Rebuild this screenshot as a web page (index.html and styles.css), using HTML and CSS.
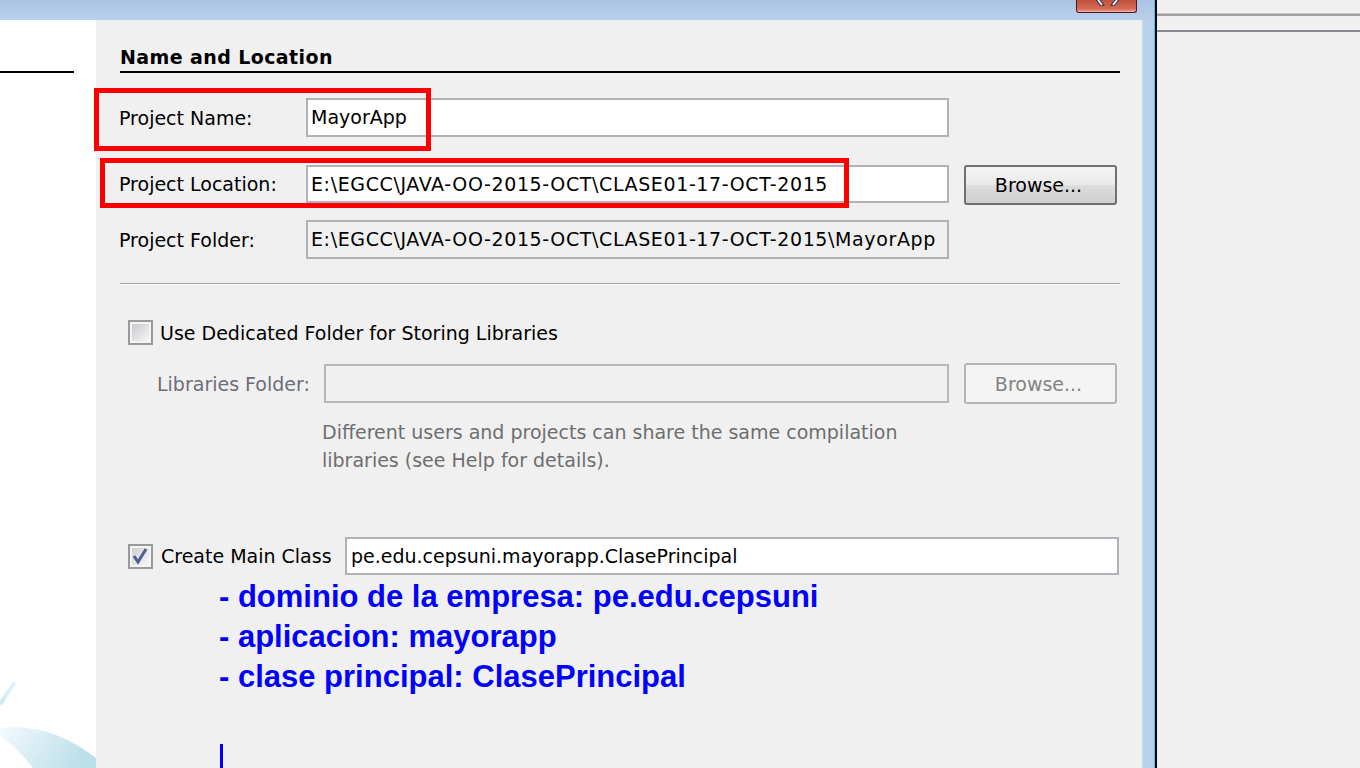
FILE: index.html
```html
<!DOCTYPE html>
<html>
<head>
<meta charset="utf-8">
<link rel="stylesheet" href="styles.css">
</head>
<body>
<div class="window">
  <div class="titlebar">
    <div class="close">
      <svg class="close-x" width="24" height="6" viewBox="0 0 24 6">
        <path d="M2 0 L6 5" stroke="#3b3b4a" stroke-width="4" stroke-linecap="square"/>
        <path d="M2 0 L6 5" stroke="#f4f4f8" stroke-width="2"/>
        <path d="M21 0 L17 5" stroke="#3b3b4a" stroke-width="4" stroke-linecap="square"/>
        <path d="M21 0 L17 5" stroke="#f4f4f8" stroke-width="2"/>
      </svg>
    </div>
  </div>
  <div class="body">
    <div class="side">
      <div class="side-line"></div>
      <svg class="swoosh" width="96" height="90" viewBox="0 0 96 90">
        <defs>
          <linearGradient id="sw" x1="0" y1="0" x2="1" y2="0.3">
            <stop offset="0" stop-color="#f4fafd"/>
            <stop offset="1" stop-color="#bcdfeb"/>
          </linearGradient>
          <linearGradient id="sl" x1="0" y1="1" x2="1" y2="0">
            <stop offset="0" stop-color="#cfe8f2"/>
            <stop offset="1" stop-color="#e6f3f9"/>
          </linearGradient>
        </defs>
        <path d="M0 22 L13 4 L17 4 L3 26 L0 27 Z" fill="url(#sl)"/>
        <path d="M0 50 Q50 44 96 80 L96 90 L33 90 Q16 68 0 58 Z" fill="url(#sw)"/>
      </svg>
    </div>
    <div class="main">
      <div class="heading">Name and Location</div>

      <div class="row r1">
        <div class="label">Project Name:</div>
        <div class="field">MayorApp</div>
      </div>

      <div class="row r2">
        <div class="label">Project Location:</div>
        <div class="field path">E:\EGCC\JAVA-OO-2015-OCT\CLASE01-17-OCT-2015</div>
        <div class="btn">Browse...</div>
      </div>

      <div class="row r3">
        <div class="label">Project Folder:</div>
        <div class="field ro path">E:\EGCC\JAVA-OO-2015-OCT\CLASE01-17-OCT-2015\MayorApp</div>
      </div>

      <div class="sep"></div>

      <div class="row chk1">
        <svg class="cb" width="25" height="25" viewBox="0 0 25 25">
          <defs>
            <linearGradient id="cbg" x1="0" y1="0" x2="1" y2="1">
              <stop offset="0" stop-color="#c9c9cf"/>
              <stop offset="1" stop-color="#f6f6f6"/>
            </linearGradient>
          </defs>
          <rect x="1" y="1" width="23" height="23" fill="#f4f4f4" stroke="#9a9a9a" stroke-width="2"/>
          <rect x="4" y="4" width="17" height="17" fill="url(#cbg)"/>
        </svg>
        <div class="cb-text">Use Dedicated Folder for Storing Libraries</div>
      </div>

      <div class="row r4">
        <div class="label dis">Libraries Folder:</div>
        <div class="field dfield"></div>
        <div class="btn dbtn">Browse...</div>
      </div>

      <div class="help">Different users and projects can share the same compilation<br>libraries (see Help for details).</div>

      <div class="row chk2">
        <svg class="cb" width="25" height="25" viewBox="0 0 25 25">
          <defs>
            <linearGradient id="cbg2" x1="0" y1="0" x2="1" y2="1">
              <stop offset="0" stop-color="#cfd0d6"/>
              <stop offset="1" stop-color="#f6f6f6"/>
            </linearGradient>
          </defs>
          <rect x="1" y="1" width="23" height="23" fill="#f4f4f4" stroke="#9a9a9a" stroke-width="2"/>
          <rect x="4" y="4" width="17" height="17" fill="url(#cbg2)"/>
          <path d="M6 12 L10 18 L18 5" fill="none" stroke="#4c5f91" stroke-width="3"/>
        </svg>
        <div class="cb-text wide">Create Main Class</div>
        <div class="field mfield">pe.edu.cepsuni.mayorapp.ClasePrincipal</div>
      </div>

      <div class="notes">
        <div>- dominio de la empresa: pe.edu.cepsuni</div>
        <div>- aplicacion: mayorapp</div>
        <div>- clase principal: ClasePrincipal</div>
      </div>
      <div class="caret"></div>
    </div>
    <div class="frame"></div>

    <div class="mark m1"></div>
    <div class="mark m2"></div>
  </div>
</div>
<div class="edge"></div>
<div class="desk">
  <div class="desk-line1"></div>
  <div class="desk-line2"></div>
</div>
</body>
</html>
```

FILE: styles.css
```css
html, body {
  margin: 0;
  padding: 0;
}
body {
  width: 1360px;
  height: 768px;
  overflow: hidden;
  display: flex;
  font-family: "DejaVu Sans", sans-serif;
  font-size: 19px;
  letter-spacing: 0;
  color: #000;
  background: #f0f0f0;
}
.window {
  width: 1154px;
  height: 768px;
  display: flex;
  flex-direction: column;
  border-right: 1px solid #3ec7f2;
}
.titlebar {
  height: 20px;
  flex: none;
  background: linear-gradient(#a9c3e2, #b9d0ea);
  display: flex;
  justify-content: flex-end;
  padding-right: 17px;
}
.close {
  width: 61px;
  height: 13px;
  box-sizing: border-box;
  border: 1px solid #4a1822;
  border-top: none;
  border-radius: 0 0 3px 3px;
  background: linear-gradient(#c0503a, #d46a55 70%, #e8a08f);
  box-shadow: inset 0 -1px 0 #f0b0a0;
  display: flex;
  justify-content: center;
}
.close-x {
  display: block;
  margin-left: 2px;
}
.body {
  flex: 1;
  display: flex;
  position: relative;
}
.side {
  width: 96px;
  background: #fff;
  display: flex;
  flex-direction: column;
  justify-content: space-between;
}
.side-line {
  width: 74px;
  height: 2px;
  margin-top: 51px;
  background: #000;
}
.swoosh {
  display: block;
}
.main {
  width: 1046px;
  box-sizing: border-box;
  padding: 0 22px 0 23px;
  background: #f0f0f0;
  display: flex;
  flex-direction: column;
}
.frame {
  width: 12px;
  background: linear-gradient(90deg, #c3d8ee, #b9d1ea 30%);
}
.heading {
  margin-top: 24px;
  margin-left: 1px;
  height: 27px;
  line-height: 27px;
  font-weight: bold;
  letter-spacing: 0.4px;
  border-bottom: 2px solid #000;
}
.row {
  display: flex;
  align-items: center;
}
.label {
  width: 187px;
  flex: none;
}
.field {
  width: 643px;
  height: 39px;
  box-sizing: border-box;
  border: 2px solid #b1b1b8;
  background: #fff;
  padding-left: 3px;
  line-height: 35px;
  white-space: nowrap;
  overflow: hidden;
  flex: none;
}
.path {
  letter-spacing: 0.62px;
}
.r1 { margin-top: 25px; }
.r2 { margin-top: 28px; align-items: flex-start; }
.r2 .label { line-height: 38px; }
.r2 .field { height: 38px; line-height: 34px; }
.r3 { margin-top: 15px; }
.ro {
  background: #f0f0f0;
}
.btn {
  margin-left: 15px;
  width: 153px;
  height: 40px;
  box-sizing: border-box;
  border: 2px solid #707070;
  border-radius: 3px;
  background: linear-gradient(#f3f3f3, #ebebeb 48%, #dddddd 52%, #cfcfcf);
  display: flex;
  align-items: center;
  justify-content: center;
  padding-right: 4px;
  flex: none;
}
.sep {
  margin-top: 24px;
  margin-left: 1px;
  height: 1px;
  background: #a0a0a0;
  border-bottom: 1px solid #fff;
}
.chk1 { margin-top: 35px; }
.cb {
  display: block;
  margin-left: 9px;
  flex: none;
}
.cb-text {
  margin-left: 7px;
}
.r4 { margin-top: 18px; }
.r4 .label {
  width: 167px;
  margin-left: 38px;
}
.dis { color: #6d6d78; }
.dfield {
  width: 625px;
  background: #f0f0f0;
  border-color: #b8b8bc;
}
.dbtn {
  height: 41px;
  border-color: #b4b4b8;
  background: #f4f4f4;
  color: #838383;
}
.help {
  margin-top: 14px;
  margin-left: 203px;
  line-height: 28px;
  color: #6e6e6e;
}
.chk2 { margin-top: 63px; }
.wide {
  width: 184px;
  margin-left: 8px;
  flex: none;
}
.mfield {
  width: 774px;
  height: 38px;
  line-height: 34px;
  padding-left: 4px;
}
.notes {
  margin-top: 2px;
  margin-left: 100px;
  font-family: "Liberation Sans", Arial, sans-serif;
  font-weight: bold;
  font-size: 31px;
  line-height: 40px;
  letter-spacing: 0;
  color: #0000ff;
}
.caret {
  margin-top: 47px;
  margin-left: 101px;
  width: 3px;
  height: 24px;
  background: #0000ff;
}
.mark {
  position: absolute;
  box-sizing: border-box;
  border: 5px solid #ff0000;
}
.m1 {
  left: 94px;
  top: 68px;
  width: 337px;
  height: 63px;
}
.m2 {
  left: 100px;
  top: 138px;
  width: 749px;
  height: 50px;
}
.edge {
  width: 2px;
  height: 768px;
  background: #000;
  flex: none;
}
.desk {
  flex: 1;
  background: #f0f0f0;
  display: flex;
  flex-direction: column;
}
.desk-line1 {
  margin-top: 13px;
  height: 1px;
  background: #c8c8c8;
  border-bottom: 2px solid #a0a0a0;
}
.desk-line2 {
  margin-top: 14px;
  height: 2px;
  background: #868b94;
}
```
